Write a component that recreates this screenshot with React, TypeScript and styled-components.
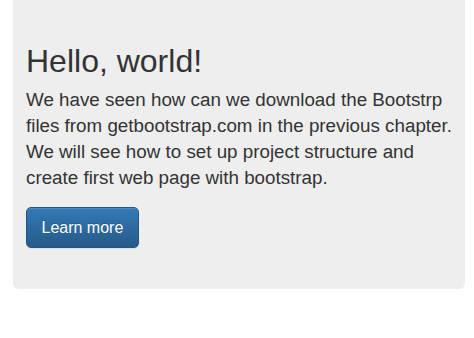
import React from 'react';
import styled, { createGlobalStyle } from 'styled-components';

const GlobalStyle = createGlobalStyle`
  html, body {
    margin: 0;
    padding: 0;
    background: #fff;
  }
  body {
    font-family: "Liberation Sans", Arial, sans-serif;
    color: #333;
  }
`;

const Page = styled.div`
  padding: 0 9px 0 13px;
`;

const Jumbotron = styled.div`
  background: #eee;
  border-radius: 0 0 6px 6px;
  padding: 44px 13px 41px;
`;

const Title = styled.h1`
  margin: 0 0 8px;
  font-size: 32px;
  line-height: 1.1;
  font-weight: 400;
  color: #333;
`;

const Lead = styled.p`
  margin: 0 0 16px;
  font-size: 18.8px;
  line-height: 26px;
  color: #333;
`;

const Button = styled.a`
  display: inline-flex;
  align-items: center;
  height: 41px;
  box-sizing: border-box;
  padding: 0 14.5px;
  font-size: 16px;
  color: #fff;
  text-decoration: none;
  text-shadow: 0 -1px 0 rgba(0, 0, 0, 0.2);
  background-image: linear-gradient(to bottom, #337ab7 0%, #265a88 100%);
  border: 1px solid #245580;
  border-radius: 5px;
  box-shadow: inset 0 1px 0 rgba(255, 255, 255, 0.15), 0 1px 1px rgba(0, 0, 0, 0.075);
`;

const App: React.FC = () => (
  <>
    <GlobalStyle />
    <Page>
      <Jumbotron>
        <Title>Hello, world!</Title>
        <Lead>
          We have seen how can we download the Bootstrp files from
          getbootstrap.com in the previous chapter. We will see how to set up
          project structure and create first web page with bootstrap.
        </Lead>
        <Button href="#" role="button">
          Learn more
        </Button>
      </Jumbotron>
    </Page>
  </>
);

export default App;
